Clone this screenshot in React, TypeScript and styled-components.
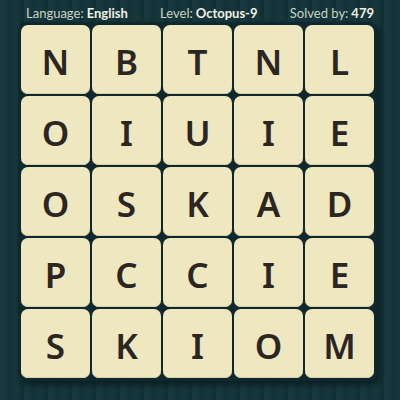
import React from 'react';
import styled, {createGlobalStyle} from 'styled-components';

const GlobalStyle = createGlobalStyle`
  html, body {
    margin: 0;
    padding: 0;
    width: 400px;
    height: 400px;
    overflow: hidden;
  }
  body {
    font-family: Lato, "Noto Sans", sans-serif;
  }
`;

const Page = styled.div`
  width: 400px;
  height: 400px;
  background-color: #153539;
  background-image: repeating-linear-gradient(
    90deg,
    #17383d 0 7px,
    #133239 7px 12px,
    #16363a 12px 20px,
    #123035 20px 24px
  );
  box-sizing: border-box;
  padding-top: 4px;
`;

const InfoBar = styled.div`
  display: flex;
  justify-content: space-between;
  align-items: center;
  height: 18px;
  padding: 0 26px 0 26px;
  font-size: 13px;
  color: #c8d2c4;
`;

const InfoItem = styled.span`
  white-space: nowrap;
  b {
    color: #f3f0e2;
    font-weight: 700;
    margin-left: 3px;
  }
`;

const Board = styled.div`
  margin: 0 0 0 18px;
  width: 359px;
  box-sizing: border-box;
  padding: 3px;
  background: #0f282e;
  border-radius: 8px;
  box-shadow: 3px 4px 5px rgba(5, 20, 24, 0.6);
  display: grid;
  grid-template-columns: repeat(5, 69px);
  grid-auto-rows: 69px;
  gap: 2px;
`;

const Tile = styled.div`
  background: #efe7c0;
  border-radius: 7px;
  box-shadow: inset 0 -1px 0 #d8cfa6;
  display: flex;
  align-items: center;
  justify-content: center;
  font-family: "Noto Sans", Lato, sans-serif;
  font-size: 35px;
  font-weight: 600;
  color: #2b2622;
  padding-top: 3px;
  box-sizing: border-box;
`;

const letters = 'NBTNLOIUIEOSKADPCCIESKIOM'.split('');

export default function App() {
  return (
    <>
      <GlobalStyle />
      <Page>
        <InfoBar>
          <InfoItem>
            Language:<b>English</b>
          </InfoItem>
          <InfoItem>
            Level:<b>Octopus-9</b>
          </InfoItem>
          <InfoItem>
            Solved by:<b>479</b>
          </InfoItem>
        </InfoBar>
        <Board>
          {letters.map((l, i) => (
            <Tile key={i}>{l}</Tile>
          ))}
        </Board>
      </Page>
    </>
  );
}
